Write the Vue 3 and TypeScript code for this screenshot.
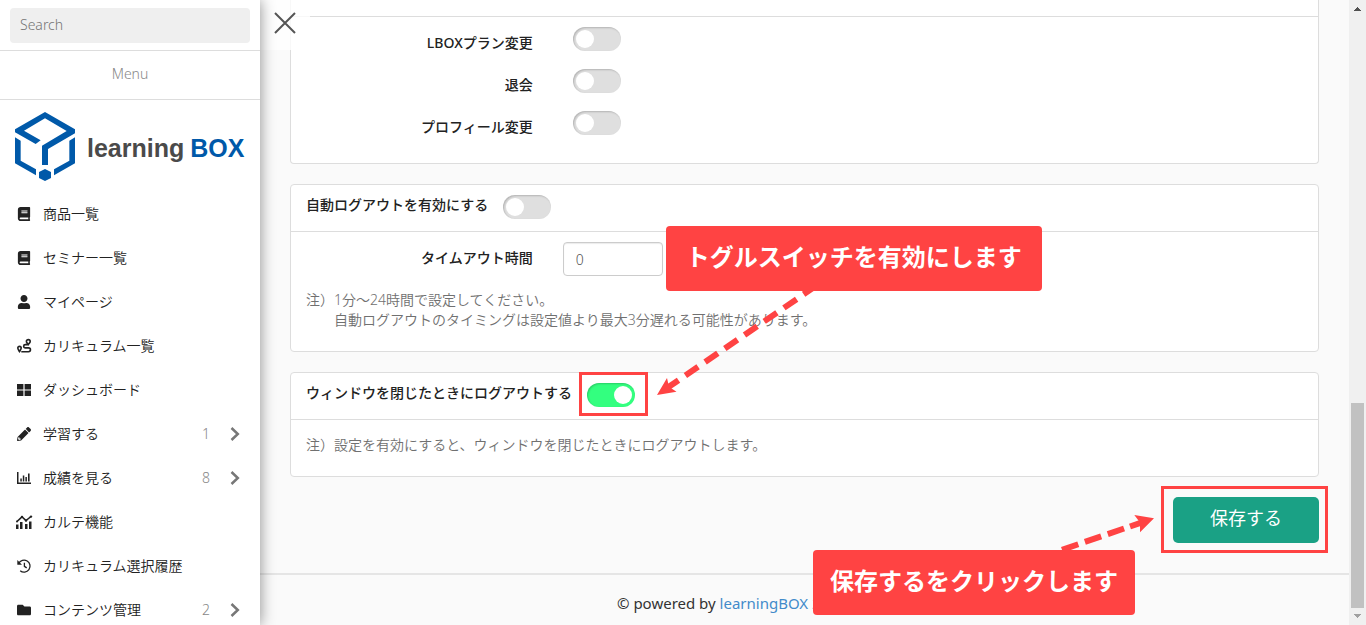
<script setup lang="ts">
import { ref } from 'vue'

interface MenuItem {
  label: string
  icon: string
  count?: number
}

const menu: MenuItem[] = [
  { label: '商品一覧', icon: 'book' },
  { label: 'セミナー一覧', icon: 'book' },
  { label: 'マイページ', icon: 'user' },
  { label: 'カリキュラム一覧', icon: 'route' },
  { label: 'ダッシュボード', icon: 'grid' },
  { label: '学習する', icon: 'pencil', count: 1 },
  { label: '成績を見る', icon: 'chart', count: 8 },
  { label: 'カルテ機能', icon: 'trend' },
  { label: 'カリキュラム選択履歴', icon: 'history' },
  { label: 'コンテンツ管理', icon: 'folder', count: 2 },
]

const permissions = ref([
  { id: 'plan', label: 'LBOXプラン変更', on: false },
  { id: 'leave', label: '退会', on: false },
  { id: 'profile', label: 'プロフィール変更', on: false },
])

const search = ref('')
const autoLogout = ref(false)
const timeout = ref('0')
const closeLogout = ref(true)
</script>

<template>
  <div class="app">
    <aside class="sidebar">
      <div class="search">
        <input v-model="search" type="text" placeholder="Search" aria-label="Search" />
      </div>
      <div class="menu-title">Menu</div>
      <a class="logo" href="#" aria-label="learningBOX">
        <svg class="cube" viewBox="45 336 180 207" aria-hidden="true">
          <path d="M45 388 135 336 225 388V400L144 447V495H126V437L200 393 135 355 72 392 122 421 107 432 45 397Z" />
          <path d="M45 412 62 422V482L108 508V526L45 490Z" />
          <path d="M225 412 208 422V482L162 508V526L225 490Z" />
          <path d="M135 507 153 516V534L135 543 117 534V516Z" />
        </svg>
        <span class="word">learning<b>BOX</b></span>
      </a>
      <nav>
        <a v-for="item in menu" :key="item.label" class="item" href="#">
          <svg v-if="item.icon === 'book'" class="icon" viewBox="0 0 448 512">
            <path d="M448 360V24c0-13.3-10.7-24-24-24H96C43 0 0 43 0 96v320c0 53 43 96 96 96h328c13.3 0 24-10.7 24-24v-16c0-7.5-3.5-14.3-8.9-18.7-4.2-15.4-4.2-59.3 0-74.7 5.4-4.3 8.9-11.1 8.9-18.6zM128 134c0-3.3 2.7-6 6-6h212c3.3 0 6 2.7 6 6v20c0 3.3-2.7 6-6 6H134c-3.3 0-6-2.7-6-6v-20zm0 64c0-3.3 2.7-6 6-6h212c3.3 0 6 2.7 6 6v20c0 3.3-2.7 6-6 6H134c-3.3 0-6-2.7-6-6v-20zm253.4 250H96c-17.7 0-32-14.3-32-32 0-17.6 14.4-32 32-32h285.4c-1.9 17.1-1.9 46.9 0 64z" />
          </svg>
          <svg v-else-if="item.icon === 'user'" class="icon" viewBox="0 0 448 512">
            <path d="M224 256c70.7 0 128-57.3 128-128S294.700 0 224 0 96 57.300 96 128s57.300 128 128 128zm89.600 32h-16.700c-22.200 10.200-46.900 16-72.900 16s-50.600-5.800-72.900-16h-16.700C60.200 288 0 348.200 0 422.400V464c0 26.500 21.500 48 48 48h352c26.500 0 48-21.500 48-48v-41.600c0-74.200-60.200-134.400-134.400-134.400z" />
          </svg>
          <svg v-else-if="item.icon === 'route'" class="icon" viewBox="0 0 14 14">
            <path class="line" d="M2.500 12.600C1.500 11 .8 10.200.8 9.100a1.700 1.700 0 0 1 3.400 0C4.200 10.200 3.500 11 2.500 12.600ZM11.300 5.600C10.200 4.100 9.400 3.500 9.400 2.500a1.900 1.900 0 0 1 3.800 0C13.200 3.500 12.400 4.100 11.300 5.600ZM11 5.600H8.300a1.600 1.600 0 0 0 0 3.300h3.200a1.900 1.900 0 0 1 0 3.900H4.300" />
          </svg>
          <svg v-else-if="item.icon === 'grid'" class="icon" viewBox="0 0 14 14">
            <path d="M0 1h6.400v5.500H0zM7.600 1H14v5.500H7.600zM0 7.600h6.400V13H0zM7.600 7.600H14V13H7.600z" />
          </svg>
          <svg v-else-if="item.icon === 'pencil'" class="icon" viewBox="0 0 512 512">
            <path d="M497.900 142.100l-46.100 46.100c-4.700 4.700-12.300 4.700-17 0l-111-111c-4.700-4.700-4.700-12.300 0-17l46.100-46.100c18.700-18.700 49.100-18.700 67.900 0l60.100 60.100c18.800 18.700 18.800 49.100 0 67.900zM284.200 99.800L21.600 362.400.4 483.900c-2.900 16.400 11.400 30.600 27.800 27.800l121.500-21.300 262.600-262.600c4.700-4.700 4.700-12.300 0-17l-111-111c-4.800-4.700-12.400-4.700-17.100 0zM88 424h48v36.300l-64.500 11.300-31.100-31.100L51.700 376H88v48z" />
          </svg>
          <svg v-else-if="item.icon === 'chart'" class="icon" viewBox="0 0 14 14">
            <path d="M0 1h1.500v10.500H14V13H0zM3.300 7.500h1.500v3H3.300zM5.800 4.500h1.500v6H5.800zM8.400 6h1.500v4.500H8.400zM11 2.500h1.600v8H11z" />
          </svg>
          <svg v-else-if="item.icon === 'trend'" class="icon" viewBox="0 0 14 14">
            <path d="M-1 9.500h2.500V14H-1zM3 7h2.500v7H3zM8 9h2.500v5H8zM12 6.500h2.500V14H12z" />
            <path class="line" d="M0 6.500 5 1.800l4 3.700 5-4" />
            <circle cx="5" cy="1.900" r="1.200" /><circle cx="9" cy="5.500" r="1.200" /><circle cx="14" cy="1.600" r="1.200" /><circle cx="0" cy="6.500" r="1" />
          </svg>
          <svg v-else-if="item.icon === 'history'" class="icon" viewBox="0 0 14 14">
            <path class="line thin" d="M1.700 4.400A6 6 0 1 1 3.200 11.700M7.400 3.700V7.300L9.700 8.900" />
            <path d="M.3 1v4.700H5z" />
          </svg>
          <svg v-else class="icon" viewBox="0 0 512 512">
            <path d="M464 128H272l-64-64H48C21.500 64 0 85.500 0 112v288c0 26.500 21.500 48 48 48h416c26.500 0 48-21.500 48-48V176c0-26.500-21.500-48-48-48z" />
          </svg>
          <span class="label">{{ item.label }}</span>
          <template v-if="item.count">
            <span class="count">{{ item.count }}</span>
            <svg class="chevron" viewBox="0 0 10 14" aria-hidden="true"><path d="M1.500 1 7.800 7 1.500 13" /></svg>
          </template>
        </a>
      </nav>
    </aside>

    <main class="main">
      <button class="close" type="button" aria-label="Close menu">
        <svg viewBox="0 0 22 22"><path d="M1 1 21 21M21 1 1 21" /></svg>
      </button>

      <div class="content">
        <section class="card first">
          <div class="card-head bare"></div>
          <div class="card-body">
            <div v-for="p in permissions" :key="p.id" class="row">
              <label :for="p.id">{{ p.label }}</label>
              <div class="field inset"><input :id="p.id" v-model="p.on" class="toggle" type="checkbox" /></div>
            </div>
          </div>
        </section>

        <section class="card">
          <div class="card-head">
            <label for="auto">自動ログアウトを有効にする</label>
            <input id="auto" v-model="autoLogout" class="toggle" type="checkbox" />
          </div>
          <div class="card-body noted">
            <div class="row short">
              <label for="timeout">タイムアウト時間</label>
              <div class="field anchor">
                <input id="timeout" v-model="timeout" class="text" type="text" />
                <div class="callout toggle-tip">トグルスイッチを有効にします</div>
              </div>
            </div>
            <p class="note">注）1分～24時間で設定してください。<span class="indent">自動ログアウトのタイミングは設定値より最大3分遅れる可能性があります。</span></p>
          </div>
        </section>

        <section class="card">
          <div class="card-head">
            <label for="closing">ウィンドウを閉じたときにログアウトする</label>
            <span class="anchor">
              <input id="closing" v-model="closeLogout" class="toggle" type="checkbox" />
              <span class="frame toggle-frame"></span>
              <svg class="arrow toggle-arrow" viewBox="657 285 160 112" aria-hidden="true">
                <path class="dash" stroke-dasharray="15.4 8.500" d="M685.400 375.500 812 288.600" />
                <path class="dash" d="M667 388.100 678.500 380.300" />
                <path class="head" d="M657 395 667 378 669 386.800 676.500 391.800Z" />
              </svg>
            </span>
          </div>
          <div class="card-body noted">
            <p class="note">注）設定を有効にすると、ウィンドウを閉じたときにログアウトします。</p>
          </div>
        </section>

        <div class="actions">
          <div class="anchor">
            <button class="save" type="button">保存する</button>
            <span class="frame save-frame"></span>
            <svg class="arrow save-arrow" viewBox="1054 510 102 46" aria-hidden="true">
              <path class="dash" stroke-dasharray="17.2 7" d="M1062 549.800 1125 528.200" />
              <path class="dash" d="M1130 526.500 1142 522.400" />
              <path class="head" d="M1154 518.300 1134.300 515 1140 522.600 1140 532.300Z" />
            </svg>
            <div class="callout save-tip">保存するをクリックします</div>
          </div>
        </div>
      </div>

      <footer class="footer">© powered by <a href="#">learningBOX 2</a></footer>
    </main>

    <div class="scrollbar" aria-hidden="true">
      <svg viewBox="0 0 17 17"><path fill="#505050" d="M8 7h1v1h1v1h1v1h1v1H5v-1h1V9h1V8h1z" /></svg>
      <div class="thumb"></div>
      <svg viewBox="0 0 17 17"><path fill="#a0a0a0" d="M5 6h7v1h-1v1h-1v1H9v1H8V9H7V8H6V7H5z" /></svg>
    </div>
  </div>
</template>

<style>
body {
  margin: 0;
  overflow: hidden;
}
</style>

<style scoped>
* {
  box-sizing: border-box;
}
.app {
  display: flex;
  height: 100vh;
  overflow: hidden;
  background: #fafafa;
  color: #222;
  font: 350 14px/20px "Noto Sans", "Noto Sans CJK JP", sans-serif;
}
input,
button {
  font: inherit;
  margin: 0;
}
a {
  text-decoration: none;
}
.sidebar {
  position: relative;
  z-index: 2;
  flex: 0 0 260px;
  overflow: hidden;
  background: #fff;
  box-shadow: 0 0 14px rgba(0, 0, 0, 0.45);
}
.search {
  padding: 8px 10px 7px;
  border-bottom: 1px solid #ddd;
}
.search input {
  display: block;
  width: 100%;
  height: 35px;
  padding: 0 10px 2px;
  border: 0;
  border-radius: 4px;
  background: #efefef;
  color: #555;
}
.search input::placeholder {
  color: #757575;
  opacity: 1;
}
.menu-title {
  padding: 13px 0 15px;
  border-bottom: 1px solid #ddd;
  text-align: center;
  color: #888;
}
.logo {
  display: flex;
  align-items: center;
  gap: 12px;
  height: 92px;
  padding-left: 15px;
}
.cube {
  flex: none;
  width: 60px;
  height: 69px;
  fill: #0059a9;
}
.word {
  padding-top: 4px;
  font: bold 25px/36px "Liberation Sans Narrow", "Liberation Sans", sans-serif;
  color: #4a4a4a;
}
.word b {
  margin-left: 6px;
  color: #0059a9;
}
.item {
  display: flex;
  align-items: center;
  height: 44px;
  padding: 0 20px 0 17px;
  color: #222;
}
.icon {
  width: 14px;
  height: 14px;
  margin-right: 12px;
  fill: #222;
  overflow: visible;
}
.icon .line {
  fill: none;
  stroke: #222;
  stroke-width: 1.600;
}
.icon .thin {
  stroke-width: 1.300;
}
.label {
  flex: 1;
}
.count {
  color: #888;
}
.chevron {
  width: 10px;
  height: 14px;
  margin-left: 20px;
  fill: none;
  stroke: #777;
  stroke-width: 2.500;
}
.main {
  position: relative;
  flex: 1;
  min-width: 0;
}
.close {
  position: absolute;
  z-index: 1;
  top: 0;
  left: 0;
  width: 50px;
  height: 50px;
  padding: 12px 14px 16px;
  border: 0;
  background: rgba(255, 255, 255, 0.8);
}
.close svg {
  display: block;
  width: 22px;
  height: 22px;
  fill: none;
  stroke: #555;
  stroke-width: 2;
}
.content {
  padding: 0 30px 30px;
}
.card {
  margin-bottom: 20px;
  border: 1px solid #ddd;
  border-radius: 4px;
  background: #fff;
}
.first {
  border-top: 0;
  border-radius: 0 0 4px 4px;
}
.card-head {
  display: flex;
  align-items: flex-start;
  gap: 15px;
  padding: 10px 15px 12px;
  border-bottom: 1px solid #ddd;
}
.bare {
  padding: 16px 0 0;
}
label {
  font-weight: 500;
}
.card-body {
  padding: 10px 0;
}
.noted {
  padding-bottom: 21px;
}
.row {
  display: grid;
  grid-template-columns: 1fr 3fr;
  height: 42px;
}
.short {
  height: 34px;
}
.row label {
  padding: 6px 15px 0 0;
  text-align: right;
}
.field {
  padding-left: 15px;
}
.inset {
  padding-left: 25px;
}
.toggle {
  appearance: none;
  display: block;
  width: 48px;
  height: 24px;
  padding: 3px;
  border-radius: 12px;
  background: #dfdfdf;
  box-shadow: inset 1px 1px 2px rgba(0, 0, 0, 0.2);
}
.toggle::before {
  content: "";
  display: block;
  width: 18px;
  height: 18px;
  border-radius: 50%;
  background: #fff;
}
.toggle:checked {
  background: #33ff7f;
}
.toggle:checked::before {
  margin-left: auto;
}
.text {
  display: block;
  width: 100px;
  height: 34px;
  padding: 0 12px;
  border: 1px solid #ccc;
  border-radius: 4px;
  background: #fff;
  box-shadow: inset 0 1px 1px rgba(0, 0, 0, 0.08);
  color: #555;
}
.note {
  margin: 14px 15px 0;
  color: #707070;
}
.card-body > .note:first-child {
  margin-top: 5px;
}
.indent {
  display: block;
  padding-left: 28px;
}
.actions {
  display: flex;
  justify-content: flex-end;
}
.save {
  display: block;
  width: 146px;
  height: 46px;
  padding: 0 0 4px;
  border: 0;
  border-radius: 5px;
  background: #1aa185;
  color: #fff;
  font-size: 18px;
  font-weight: 400;
}
.footer {
  padding: 18px 0 0 357px;
  border-top: 2px solid #e5e5e5;
  color: #333;
  font-size: 15px;
  font-weight: 400;
}
.footer a {
  color: #428bca;
}
.scrollbar {
  display: flex;
  flex-direction: column;
  justify-content: space-between;
  flex: 0 0 17px;
  background: #f0f0f0;
}
.scrollbar svg {
  display: block;
  width: 17px;
  height: 17px;
}
.thumb {
  height: 205px;
  margin: auto 2px 0;
  background: #c1c1c1;
}

/* Guidance overlays, anchored to the control they point at */
.anchor {
  position: relative;
}
.callout {
  position: absolute;
  z-index: 4;
  padding: 12px 0 15px;
  border-radius: 4px;
  background: #ff4343;
  color: #fff;
  font-size: 24px;
  font-weight: 700;
  line-height: 38px;
  text-align: center;
  white-space: nowrap;
}
.toggle-tip {
  top: -16px;
  left: 118px;
  width: 376px;
}
.save-tip {
  top: 53px;
  right: 184px;
  width: 322px;
}
.frame {
  position: absolute;
  border: 3px solid #ff4343;
  pointer-events: none;
}
.toggle-frame {
  inset: -11px -13px -9px -8px;
}
.save-frame {
  inset: -11px -9px -10px -12px;
}
.arrow {
  position: absolute;
  z-index: 3;
  pointer-events: none;
}
.toggle-arrow {
  top: -98px;
  left: 70px;
  width: 160px;
  height: 112px;
}
.save-arrow {
  top: 13px;
  left: -119px;
  width: 102px;
  height: 46px;
}
.dash {
  fill: none;
  stroke: #ff4343;
  stroke-width: 6;
}
.head {
  fill: #ff4343;
}
</style>
